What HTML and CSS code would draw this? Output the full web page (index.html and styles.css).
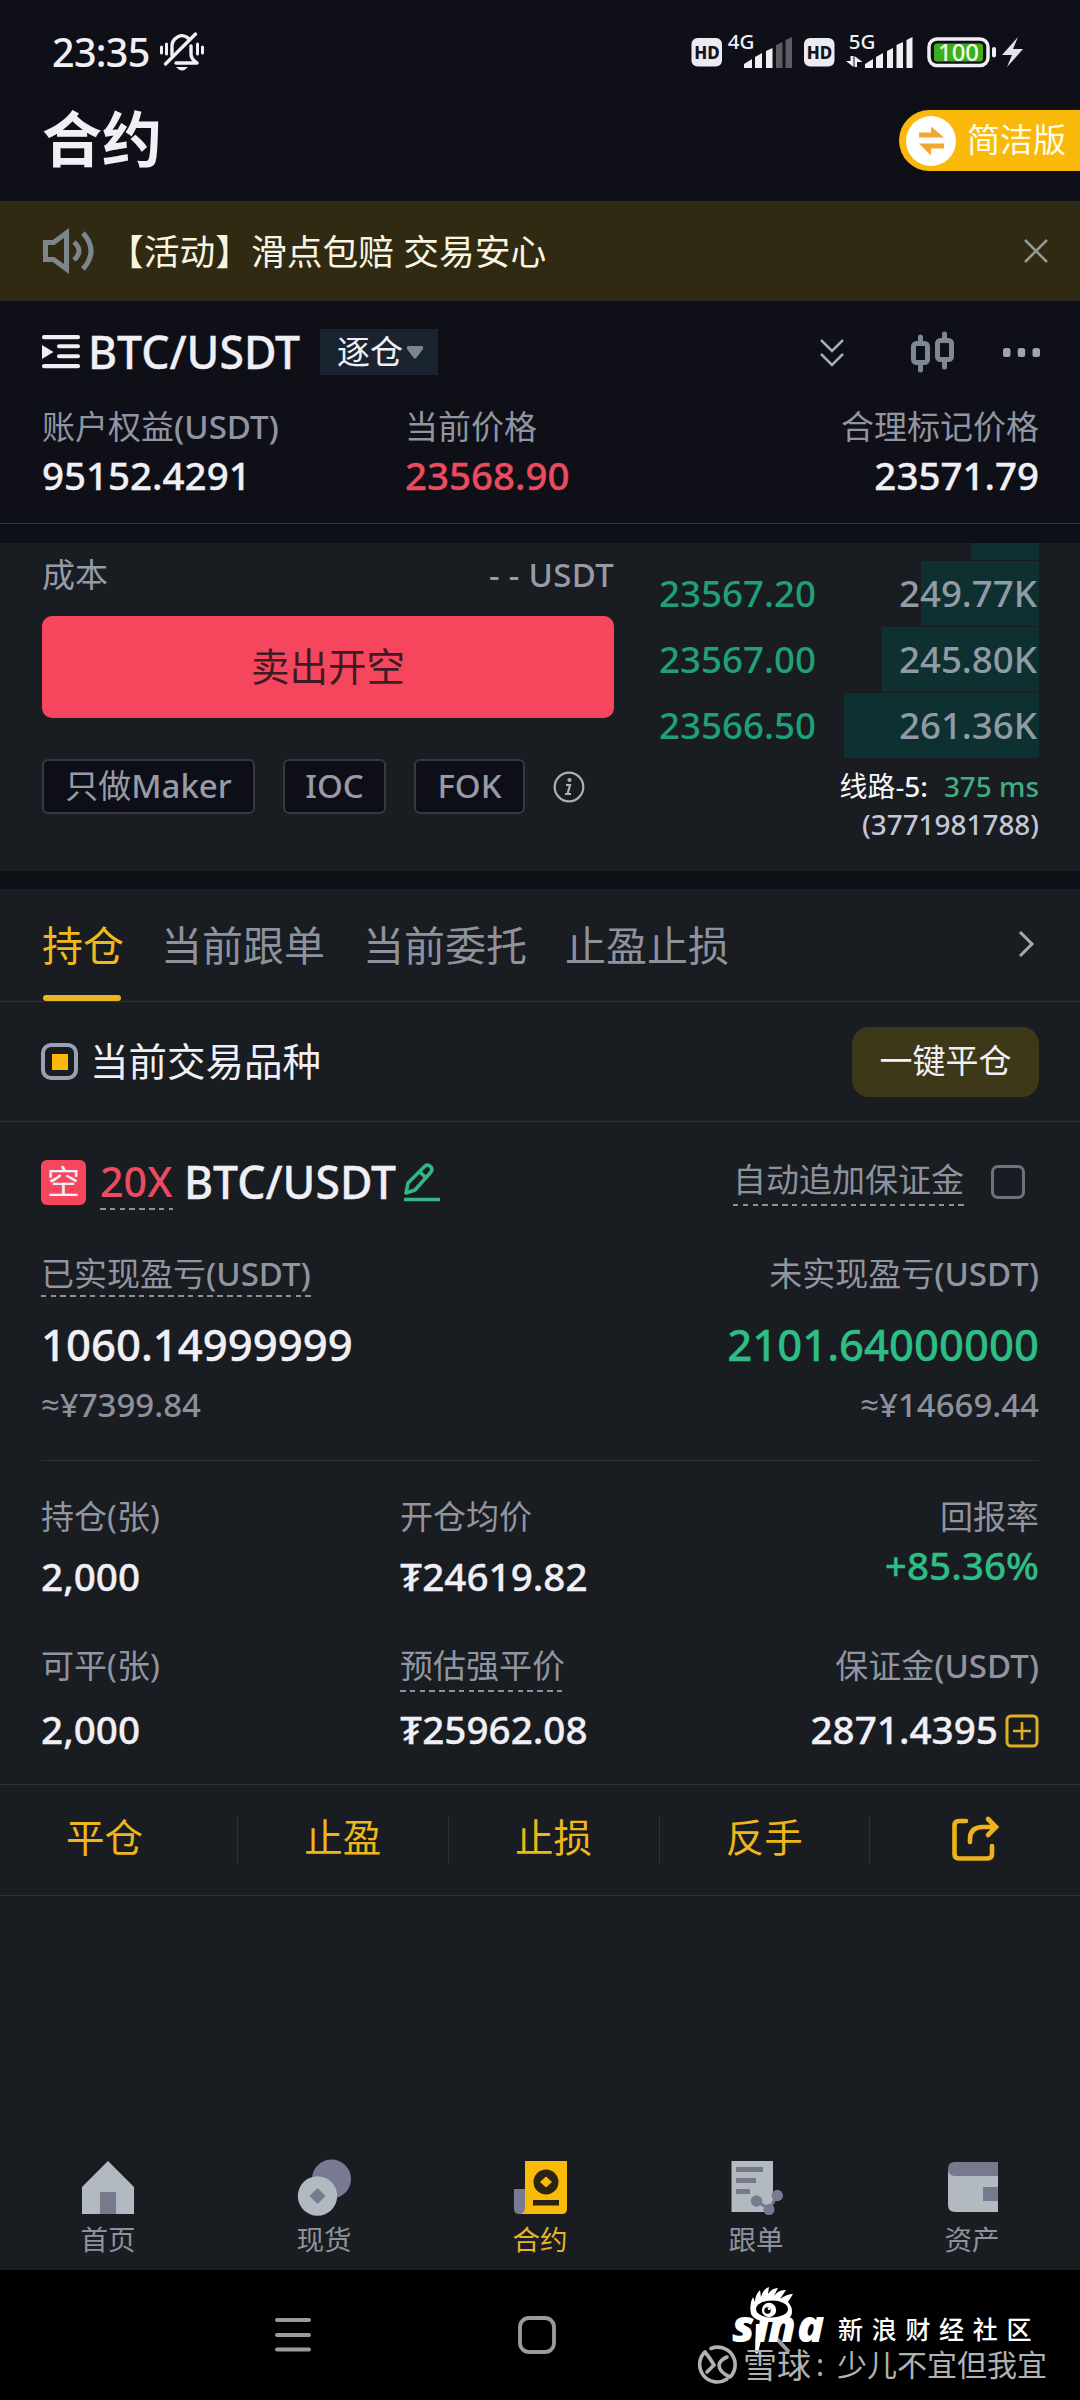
FILE: index.html
```html
<!DOCTYPE html>
<html lang="zh-CN">
<head>
<meta charset="utf-8">
<title>合约</title>
<link rel="stylesheet" href="styles.css">
</head>
<body>
<div class="status">
  <span class="clock">23:35</span>
  <svg class="bell" width="46" height="42" viewBox="0 0 46 42" fill="none" stroke="#f0eff5" stroke-width="3.400" stroke-linecap="round">
    <path d="M13 24V17a10 11 0 0 1 17-9"/><path d="M32 15v8q0 5 6 9H17" stroke-linejoin="round"/><path d="M6.500 33L36.500 3"/>
    <path d="M17 36h12q-6 7-12 0z" fill="#f0eff5" stroke="none"/>
    <path d="M2.500 16v6M7.500 13v10M38.500 13v10M43.500 16v6" stroke-width="3"/>
  </svg>
  <svg class="signals" width="336" height="44" viewBox="690 30 336 44">
    <rect x="691.500" y="38" width="30.500" height="28.500" rx="6" fill="#ecebf1"/><text x="707" y="58.500" class="hd">HD</text>
    <text x="741" y="48.500" class="net">4G</text>
    <path fill="#f0eff5" d="M744 68v-4l8-5v9zM755 68v-11l7-4v15zM766 68v-17l6.500-3v20z"/>
    <path fill="#5a5c62" d="M776 68v-23l6.500-3v26zM785.500 68v-28l6.500-3v31z"/>
    <rect x="804" y="38" width="30.500" height="28.500" rx="6" fill="#ecebf1"/><text x="819.500" y="58.500" class="hd">HD</text>
    <text x="862" y="48.500" class="net">5G</text>
    <path fill="#f0eff5" d="M865 68v-4l8-5v9zM876 68v-11l7-4v15zM887 68v-17l6-3v20zM896.500 68v-23l6.500-3v26zM906.500 68v-28l6-3v31zM850.500 56h3v11l-7.500-6h4.500zM857 67h-2.500V56l8 6H857z"/>
    <rect x="929" y="39" width="59" height="26.500" rx="8" fill="none" stroke="#f0eff5" stroke-width="3.500"/>
    <rect x="934" y="43.500" width="49" height="18" rx="3" fill="#3fae1c"/>
    <text x="958.500" y="61" class="bat">100</text>
    <rect x="992" y="47" width="4" height="10.500" rx="2" fill="#f0eff5"/>
    <path d="M1018 37l-16 18h10l-5 12 16-18h-10z" fill="#e4e3ea"/>
  </svg>
</div>
<header class="header">
  <h1>合约</h1>
  <div class="lite">
    <svg width="50" height="50" viewBox="0 0 50 50"><circle cx="25" cy="25" r="25" fill="#fff"/><path d="M13 16.500h12v-6l13 11H13zM38 27.500H13l12 12v-7h13z" fill="#f2a531"/></svg>
    <span>简洁版</span>
  </div>
</header>
<div class="banner">
  <svg width="54" height="44" viewBox="0 0 54 44" fill="none" stroke="#7d868b" stroke-width="5"><path d="M3.500 13.500h8l13-9.500v36l-13-9.500h-8z"/><path d="M32 13q10 9 0 18M41 4q16 18 0 36"/></svg>
  <span>【活动】滑点包赔 交易安心</span>
  <svg class="close" width="24" height="24" viewBox="0 0 24 24" stroke="#949994" stroke-width="2.600"><path d="M1 1l22 22M23 1L1 23"/></svg>
</div>
<section class="pair">
  <div class="pair-row">
    <svg width="40" height="36" viewBox="0 0 40 36" fill="#f0eff5"><rect width="38" height="4.300" y="1" rx="2"/><rect x="15" y="10.300" width="23" height="4" rx="2"/><rect x="15" y="20.300" width="23" height="4" rx="2"/><rect y="30" width="38" height="4.300" rx="2"/><path d="M0 11l11.500 7L0 25z"/></svg>
    <span class="symbol">BTC/USDT</span>
    <span class="mode">逐仓<svg width="18" height="15" viewBox="0 0 18 15"><path d="M2 1h14q2 1 1 3l-6 8q-2 3-4 0L1 4Q0 2 2 1z" fill="#7d8592"/></svg></span>
    <div class="tools">
      <svg width="24" height="28" viewBox="0 0 24 28" fill="none" stroke="#a6aab3" stroke-width="2.500"><path d="M1 2l11 11L23 2M1 16l11 11L23 16"/></svg>
      <svg width="44" height="44" viewBox="0 0 44 44" fill="none" stroke="#7d8894" stroke-width="5" stroke-linecap="round"><rect x="2.500" y="13.500" width="14" height="19" rx="3"/><path d="M9.500 7v5M9.500 35v5"/><rect x="26.500" y="10.500" width="14" height="19" rx="3"/><path d="M33.500 4v5M33.500 32v5"/></svg>
      <svg width="37" height="9" viewBox="0 0 37 9" fill="#a0a4ac"><rect width="7.500" height="9" rx="2.500"/><rect x="14.700" width="7.500" height="9" rx="2.500"/><rect x="29.500" width="7.500" height="9" rx="2.500"/></svg>
    </div>
  </div>
  <div class="stats">
    <div><label>账户权益<span>(USDT)</span></label><b>95152.4291</b></div>
    <div><label>当前价格</label><b class="red">23568.90</b></div>
    <div class="end"><label>合理标记价格</label><b>23571.79</b></div>
  </div>
</section>
<section class="order">
  <div class="form">
    <div class="cost"><span>成本</span><span class="latin">- - USDT</span></div>
    <button class="sell">卖出开空</button>
    <div class="chips">
      <span>只做<b>Maker</b></span><span><b>IOC</b></span><span><b>FOK</b></span>
      <svg width="32" height="32" viewBox="0 0 32 32" fill="none" stroke="#aaaeb6" stroke-width="2.200"><circle cx="16" cy="16" r="14.300"/><path d="M13 14h4l-2.500 9M12 23h6"/><circle cx="16.500" cy="9" r="1" fill="#aaaeb6"/></svg>
    </div>
  </div>
  <div class="book">
    <i class="bar-top"></i>
    <div class="level"><i style="width:118px"></i><span>23567.20</span><em>249.77K</em></div>
    <div class="level"><i style="width:157px"></i><span>23567.00</span><em>245.80K</em></div>
    <div class="level"><i style="width:195px"></i><span>23566.50</span><em>261.36K</em></div>
    <p class="line">线路-<b>5:</b><span>375 ms</span></p>
    <p class="uid">(3771981788)</p>
  </div>
</section>
<nav class="tabs">
  <span class="active">持仓</span><span>当前跟单</span><span>当前委托</span><span>止盈止损</span>
  <svg width="18" height="28" viewBox="0 0 18 28" fill="none" stroke="#a3a7b0" stroke-width="3"><path d="M3 2l12 12L3 26"/></svg>
</nav>
<div class="filter">
  <i class="check on"></i><span>当前交易品种</span><button>一键平仓</button>
</div>
<section class="position">
  <div class="head">
    <span class="side">空</span><span class="lev dashed">20X</span><span class="name">BTC/USDT</span>
    <svg width="38" height="40" viewBox="0 0 38 40" fill="none" stroke="#33b683" stroke-width="3.600" stroke-linejoin="round"><path d="M3 31l2-10L22 4q3-2 5.500.500t.500 5.500L12 28zM17 10l6 6"/><path d="M1 37.500h36" stroke-width="3.500"/></svg>
    <span class="auto dashed">自动追加保证金</span><i class="check"></i>
  </div>
  <div class="row labels"><label class="dashed">已实现盈亏<span>(USDT)</span></label><label>未实现盈亏<span>(USDT)</span></label></div>
  <div class="row pnl"><b>1060.14999999</b><b class="green">2101.64000000</b></div>
  <div class="row cny"><span>≈¥7399.84</span><span>≈¥14669.44</span></div>
  <hr>
  <div class="grid">
    <div><label>持仓(张)</label><b>2,000</b></div>
    <div><label>开仓均价</label><b>₮24619.82</b></div>
    <div class="end roe"><label>回报率</label><b class="green">+85.36%</b></div>
  </div>
  <div class="grid second">
    <div><label>可平(张)</label><b>2,000</b></div>
    <div><label class="dashed">预估强平价</label><b>₮25962.08</b></div>
    <div class="end"><label>保证金<span>(USDT)</span></label><b class="margin">2871.4395<svg width="34" height="34" viewBox="0 0 34 34" fill="none" stroke="#e0ae22" stroke-width="3"><rect x="2" y="2" width="30" height="30" rx="4"/><path d="M17 8v18M8 17h18" stroke-width="2.600"/></svg></b></div>
  </div>
</section>
<div class="actions">
  <span>平仓</span><span>止盈</span><span>止损</span><span>反手</span>
  <span><svg width="48" height="46" viewBox="0 0 48 46" fill="none" stroke="#ebb41c" stroke-width="4.600" stroke-linecap="round" stroke-linejoin="round"><path d="M15 5H8Q3.500 5 3.500 9.500V38q0 4.500 4.500 4.500h28q5 0 5-4.500V30"/><path d="M19 26v-3q0-12 13-12h12M37 3l8 8-8 8" stroke-linejoin="miter"/></svg></span>
</div>
<nav class="bottom">
  <a><svg width="56" height="56" viewBox="0 0 56 56"><path d="M2 28L28 2l26 26v27H2z" fill="#b2b9c1"/><path d="M20 33h16v22H20z" fill="#767a8b"/></svg>首页</a>
  <a><svg width="56" height="56" viewBox="0 0 56 56"><circle cx="35.500" cy="20" r="19.500" fill="#777a90"/><circle cx="21.500" cy="37" r="19.700" fill="#b2b9c1"/><path d="M21.500 29l8 8-8 8-8-8z" fill="#767a8b"/></svg>现货</a>
  <a class="active"><svg width="56" height="56" viewBox="0 0 56 56"><path d="M2 30h12v25H7q-5 0-5-5z" fill="#777a90"/><path d="M13 2h42v48q0 5-5 5H8q5-1 5-6z" fill="#fbb90a"/><circle cx="34" cy="23" r="12.500" fill="#2a2412"/><path d="M34 17.500l6 5.500-6 5.500-6-5.500z" fill="#fbb90a"/><path d="M21 41h26v5.500H21z" fill="#2a2412"/></svg>合约</a>
  <a><svg width="56" height="56" viewBox="0 0 56 56"><path d="M3.500 2H45v51H3.500z" fill="#b2b9c1"/><path d="M8 8h27v5H8zM8 19h20v5H8zM8 30h14v5H8z" fill="#767a8b"/><path d="M28.500 42L41 50l8-13" fill="none" stroke="#777a90" stroke-width="3"/><g fill="#777a90"><circle cx="28.500" cy="42" r="5.700"/><circle cx="41" cy="50.500" r="5.500"/><circle cx="49.300" cy="36.500" r="5.700"/></g></svg>跟单</a>
  <a><svg width="56" height="56" viewBox="0 0 56 56"><path d="M4 11h50v42H11q-7 0-7-7z" fill="#b2b9c1"/><path d="M11 3h43v14H11q-7 0-7-7 0-7 7-7zM39 28h15v14H39z" fill="#777a8e"/></svg>资产</a>
</nav>
<div class="sysbar">
  <svg width="38" height="34" viewBox="0 0 38 34" stroke="#9b9b9b" stroke-width="4" stroke-linecap="round"><path d="M3 2h32M3 17h32M3 31.500h32"/></svg>
  <svg width="38" height="38" viewBox="0 0 38 38" fill="none" stroke="#9b9b9b" stroke-width="3.800"><rect x="2" y="2" width="34" height="34" rx="9"/></svg>
  <svg width="14" height="16" viewBox="0 0 14 16" stroke="#9b9b9b" stroke-width="4"><path d="M1 1l12 13"/></svg>
</div>
<div class="mark sina">
  <svg width="98" height="72" viewBox="0 0 98 72">
    <text x="1 24 37 66" y="56" class="sina-word">sina</text>
    <path d="M25 38h9l-7 29q-3 2-3-2z" fill="#fff"/>
    <ellipse cx="41" cy="20.500" rx="23.500" ry="13.500" fill="#000"/>
    <path d="M20 28Q18 18 22 11l2 5q0-7 5-12l1 7Q32 3 38 1l-1 7q4-6 10-6l-4 8q5-7 12-6l-6 9q7-5 13-5l-5 8q6 7 3 14-5 6-20 6-16 0-20-8z" fill="#fff"/>
    <ellipse cx="41" cy="23" rx="16" ry="8.500" fill="#000"/><circle cx="38" cy="24" r="7.200" fill="#fff"/><circle cx="36.500" cy="24.500" r="3.200"/><circle cx="38" cy="22.800" r="1.400" fill="#fff"/>
  </svg>
  <span>新浪财经社区</span>
</div>
<div class="mark xueqiu">
  <svg width="40" height="40" viewBox="0 0 40 40" fill="none" stroke="#b2b2b2" stroke-width="3.600" stroke-linecap="round"><path d="M14 3.500A17.500 17.500 0 0 1 34 31M30 34A17.500 17.500 0 0 1 7 8"/><path d="M8 7q5 6 9 13l-7 7M33 32q-11-5-11-12 1-5 8-8"/></svg>
  <b>雪球</b><i>:</i><span>少儿不宜但我宜</span>
</div>
</body>
</html>
```
FILE: styles.css
```css
* { box-sizing: border-box; }
body { margin: 0; width: 1080px; height: 2400px; display: flex; flex-direction: column; position: relative; overflow: hidden; background: #191c20; color: #f0eff5; font-family: "Noto Sans", "Open Sans", "Noto Sans CJK SC", sans-serif; font-weight: 400; font-size: 33px; }
h1, p, hr { margin: 0; }
button { border: 0; padding: 0; font: inherit; color: inherit; }
svg { display: block; flex: none; overflow: visible; }
i, em { font-style: normal; }
label { color: #9095a1; }
b, .symbol, .name, .lev, .level, .clock, .cny, .uid, .line span, .latin, label span { font-weight: 500; }
.stats > div > b, .grid b, .pnl b, .symbol, .name { -webkit-text-stroke: 0.3px; }
.green { color: #2ebd85; }
.red { color: #e94b5f; }
.dashed { background: repeating-linear-gradient(90deg, #8c919c 0 5.500px, transparent 5.500px 9.800px) bottom / 100% 2px no-repeat; }

.status { height: 104px; flex: none; background: #0f0f17; display: flex; align-items: center; padding: 0 54px 0 52px; }
.clock { font-size: 39.500px; line-height: 44px; width: 107px; letter-spacing: -0.7px; }
.signals { margin-left: auto; }
.hd { font: 800 17px "Noto Sans", sans-serif; fill: #14141c; text-anchor: middle; }
.net { font: 500 20.500px "Noto Sans", sans-serif; fill: #f0eff5; text-anchor: middle; }
.bat { font: 500 24px "Noto Sans", sans-serif; fill: #eefbe4; text-anchor: middle; }

.header { height: 97px; flex: none; background: #0f0f17; display: flex; justify-content: space-between; padding: 6px 0 0 42px; }
h1 { font-size: 60px; line-height: 58px; font-weight: 700; }
.lite { width: 181px; height: 61px; background: #fab80b; border-radius: 31px 0 0 31px; display: flex; align-items: center; padding-left: 7px; color: #fffce6; gap: 11px; }
.lite span { line-height: 56px; margin-top: -2px; }

.banner { height: 100px; flex: none; background: #2f2a11; border: solid #2a2d1e; border-width: 2px 0; display: flex; align-items: center; padding: 0 32px 0 42px; font-size: 35.750px; color: #faf5e3; }
.banner span { margin: -3px 0 0 12px; white-space: nowrap; }
.close { margin-left: auto; }

.pair { height: 223px; flex: none; background: #0f0f17; border-bottom: 1px solid #30333c; padding: 28px 40px 0 42px; }
.pair-row { display: flex; align-items: center; height: 46px; }
.symbol { font-size: 44.500px; line-height: 46px; margin-left: 6px; width: 233px; }
.mode { width: 118px; height: 46px; background: #1a2430; display: flex; align-items: center; padding-left: 17px; gap: 3px; line-height: 42px; margin-left: -1px; }
.tools { margin-left: auto; display: flex; align-items: center; }
.tools svg:nth-child(2) { margin: 0 48px 0 67px; }
.stats { display: grid; grid-template-columns: 363px 1fr auto; margin-top: 28px; padding-right: 1px; }
.stats label { display: block; line-height: 48px; }
.stats b { display: block; font-size: 38.500px; line-height: 48px; }
.end { text-align: right; }

.order { height: 328px; flex: none; margin-top: 19px; display: flex; justify-content: space-between; padding: 0 41px 0 42px; box-shadow: 0 -19px #0d1017, 0 18px #0d1017; }
.form { width: 572px; padding-top: 12px; }
.cost { display: flex; justify-content: space-between; line-height: 40px; color: #969ba7; }
.cost .latin { letter-spacing: 0.300px; }
.sell { display: block; width: 100%; height: 102px; padding-bottom: 6px; margin-top: 21px; background: #f6465d; border-radius: 10px; font-size: 38.500px; color: #3f1a24; }
.chips { display: flex; align-items: center; margin-top: 41px; color: #969ba7; }
.chips span { height: 55px; line-height: 50px; border: 2px solid #363942; border-radius: 6px; background: #0d0e17; text-align: center; width: 213px; margin-right: 28px; }
.chips span:nth-child(2) { width: 103px; }
.chips span:nth-child(3) { width: 111px; }
.book { width: 380px; }
.bar-top { display: block; width: 68px; height: 17px; margin: 0 0 1px auto; background: #0f3030; }
.level { height: 66px; display: flex; justify-content: space-between; align-items: center; position: relative; font-size: 36.700px; padding-right: 2px; }
.level i { position: absolute; right: 0; top: 0; height: 65px; background: #0f3030; }
.level span, .level em { position: relative; line-height: 64px; margin-top: -2px; }
.level span { color: #20a078; }
.level em { color: #909ba5; }
.line, .uid { font-size: 27.900px; line-height: 38px; text-align: right; white-space: nowrap; }
.line { margin-top: 8px; color: #f7f7fa; }
.line span { margin-left: 16px; color: #3fae82; }
.uid { color: #c3c6d6; }

.tabs { height: 113px; flex: none; margin-top: 18px; border-bottom: 1px solid #2d3037; display: flex; align-items: center; padding: 0 45px 0 42px; gap: 38px; font-size: 41px; color: #8d929d; }
.tabs span { line-height: 112px; white-space: nowrap; }
.tabs .active { color: #efb81c; position: relative; width: 82px; margin-right: -1px; }
.tabs .active::after { content: ""; position: absolute; left: 1px; bottom: 0; width: 78px; height: 6px; border-radius: 3px; background: #eab61f; }
.tabs svg { margin-left: auto; margin-top: -2px; }

.filter { height: 120px; flex: none; border-bottom: 1px solid #2d3037; display: flex; align-items: center; padding: 0 41px; font-size: 38.500px; }
.filter span { margin: -6px 0 0 12px; }
.filter button { margin-left: auto; width: 187px; height: 70px; padding-bottom: 5px; border-radius: 17px; background: #3d3817; font-size: 33px; }
.check { width: 34px; height: 34px; border: 3px solid #6c7380; border-radius: 7px; flex: none; }
.check.on { width: 37px; height: 37px; border: 4px solid #98a2b0; border-radius: 10px; background: linear-gradient(#fbb90a, #fbb90a) center / 16px 16px no-repeat; }

.position { height: 663px; flex: none; border-bottom: 1px solid #2d3037; padding: 32px 41px 0; }
.head { height: 56px; display: flex; align-items: center; }
.side { width: 45px; height: 45px; line-height: 44px; border-radius: 6px; background: #f6465d; text-align: center; }
.lev { margin-left: 14px; width: 73px; height: 56px; line-height: 55px; font-size: 41.250px; color: #e94b5f; }
.name { font-size: 44.500px; line-height: 54px; margin: 0 8px 0 11px; width: 211px; }
.auto { margin: -2px 27px 0 auto; height: 50px; line-height: 48px; color: #8d929d; }
.head .check { margin-right: 14px; }
.row { display: flex; justify-content: space-between; }
.labels { margin-top: 41px; line-height: 46px; }
.labels label { height: 46px; }
.pnl { margin-top: 20px; line-height: 54px; font-size: 43.700px; }
.cny { margin-top: 13px; line-height: 41px; height: 40px; color: #8b909c; }
hr { border: 0; height: 1px; background: #2d3037; margin-top: 36px; }
.grid { display: grid; grid-template-columns: 359px 1fr auto; margin-top: 32px; }
.grid label, .grid b { display: block; line-height: 48px; }
.grid b { font-size: 38.700px; margin-top: 11px; }
.grid .roe b { margin-top: 0; }
.second { margin-top: 42px; }
.grid.second label { height: 50px; width: max-content; }
.grid.second .end label { margin-left: auto; }
.grid.second b { margin-top: 13px; }
.grid b.margin { display: flex; align-items: center; justify-content: flex-end; gap: 7px; }
.margin svg { margin-top: 3px; }

.actions { height: 111px; flex: none; border-bottom: 1px solid #2d3037; display: grid; grid-template-columns: 237px repeat(4, 1fr); align-items: center; font-size: 38.500px; color: #edb61d; }
.actions span { display: flex; align-items: center; justify-content: center; height: 48px; line-height: 46px; padding-bottom: 6px; }
.actions span:first-child { padding-right: 28px; }
.actions span + span { border-left: 1px solid #2d3037; }
.actions svg { margin-top: 4px; }

.bottom { margin-top: auto; height: 111px; flex: none; display: grid; grid-template-columns: repeat(5, 1fr); }
.bottom a { display: flex; flex-direction: column; align-items: center; gap: 8px; font-size: 27.500px; line-height: 34px; color: #8d929f; }
.bottom .active { color: #e6b426; }
.sysbar { height: 130px; flex: none; background: #000; display: flex; align-items: center; padding-left: 274px; }
.sysbar svg + svg { margin-left: 206px; }
.sysbar svg + svg + svg { margin: 22px 0 0 220px; }

.mark { position: absolute; display: flex; align-items: center; white-space: nowrap; }
.sina { left: 731px; top: 2286px; }
.sina span { margin: 14px 0 0 9px; font-size: 25px; font-weight: 500; letter-spacing: 8.700px; color: #fff; line-height: 30px; }
.sina-word { font: italic 900 45px "Noto Sans", sans-serif; fill: #fff; }
.xueqiu { left: 697px; top: 2345px; height: 40px; color: #b2b2b2; font-size: 30px; line-height: 38px; }
.xueqiu b { margin-left: 6px; font-size: 34px; font-weight: 400; }
.xueqiu i { width: 18px; margin-right: 8px; text-align: center; }
```
